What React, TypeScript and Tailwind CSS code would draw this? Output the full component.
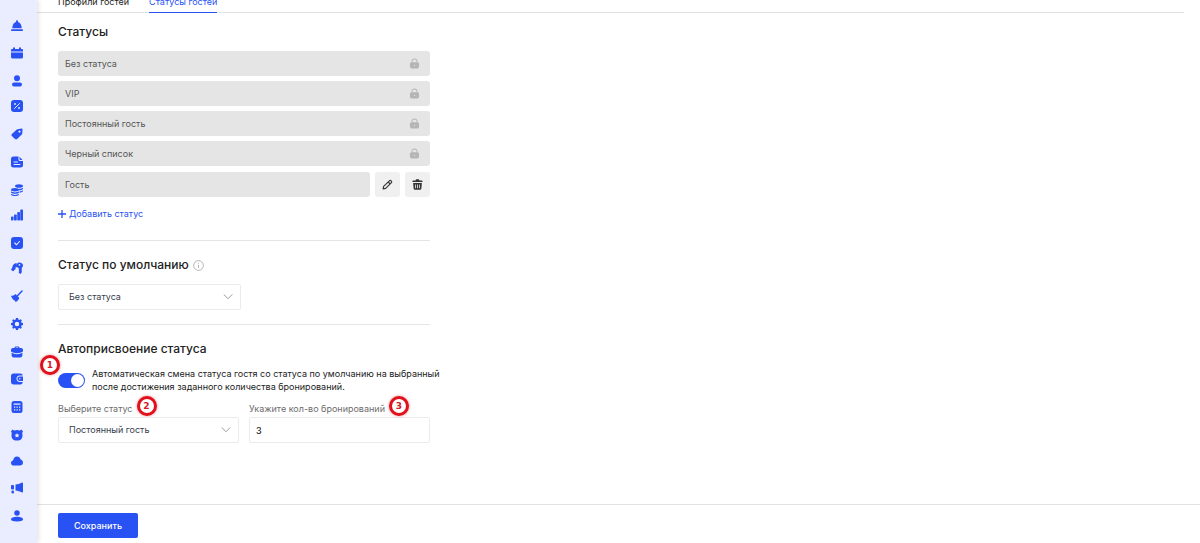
import React from 'react';
import clsx from 'clsx';

type IconProps = { className?: string; children: React.ReactNode };

const Glyph: React.FC<IconProps> = ({ className = 'size-3', children }) => (
  <svg viewBox="0 0 24 24" fill="currentColor" aria-hidden="true" className={className}>
    {children}
  </svg>
);

const cut = '#e9edff';

const NAV: { label: string; height: string; art: React.ReactNode }[] = [
  {
    label: 'Ресепшен',
    height: 'h-7',
    art: (
      <>
        <path d="M10 1h4v3.200c4.600 1 7 5 7.500 12.300h-19C3 9.200 5.400 5.200 10 4.200z" />
        <rect x="0" y="18.500" width="24" height="3.500" rx="1.500" />
      </>
    ),
  },
  {
    label: 'Календарь',
    height: 'h-[27px]',
    art: (
      <>
        <path d="M4 1h4v3h8V1h4v3h2a2 2 0 0 1 2 2v3H0V6a2 2 0 0 1 2-2h2z" />
        <path d="M0 11h24v9a3 3 0 0 1-3 3H3a3 3 0 0 1-3-3z" />
      </>
    ),
  },
  {
    label: 'Гости',
    height: 'h-7',
    art: (
      <>
        <circle cx="12" cy="6.500" r="6" />
        <rect x="2" y="15" width="20" height="8" rx="4" />
      </>
    ),
  },
  {
    label: 'Тарифы',
    height: 'h-[25px]',
    art: (
      <>
        <rect x="0" y="0" width="24" height="24" rx="6" />
        <path d="M7 17 17 7" stroke={cut} strokeWidth="2" strokeLinecap="round" />
        <circle cx="8" cy="8" r="1.800" fill={cut} />
        <circle cx="16" cy="16" r="1.800" fill={cut} />
      </>
    ),
  },
  {
    label: 'Акции',
    height: 'h-7',
    art: (
      <path
        fillRule="evenodd"
        d="M13 2.500 21 1c1.200-.2 2 .6 2 1.800l-.5 8c0 .8-.4 1.500-1 2.100l-9.300 9.300c-1.200 1.200-3 1.200-4.200 0L1.800 16c-1.200-1.200-1.200-3 0-4.200L11 3.400c.6-.5 1.200-.8 2-.9zM17 5a2.200 2.200 0 1 0 0 4.400A2.200 2.200 0 0 0 17 5z"
      />
    ),
  },
  {
    label: 'Документы',
    height: 'h-7',
    art: (
      <>
        <path d="M5 1h10v6a3 3 0 0 0 3 3h6v8a5 5 0 0 1-5 5H5a5 5 0 0 1-5-5V6a5 5 0 0 1 5-5z" />
        <path d="M17 1.500 23 8h-4a2 2 0 0 1-2-2z" />
        <path d="M6 12h7M6 17h12" stroke={cut} strokeWidth="2" strokeLinecap="round" />
      </>
    ),
  },
  {
    label: 'Финансы',
    height: 'h-7',
    art: (
      <>
        <ellipse cx="16" cy="4" rx="8" ry="3.500" />
        <path d="M10 9.500c4 1 11 .8 14-1.800v2c-1 2-4 3-7 3zM17 15c3-.2 6-1 7-3v2.200c-1 2-4 3-7 3.200z" />
        <ellipse cx="8" cy="11.500" rx="8" ry="3.300" />
        <path d="M0 14.500c3 3 13 3 16 0v2.300c-2 3.400-14 3.400-16 0zM0 19.500c3 3 13 3 16 0v1.800c-2 3.400-14 3.400-16 0z" />
      </>
    ),
  },
  {
    label: 'Отчёты',
    height: 'h-[25px]',
    art: (
      <>
        <rect x="0" y="15" width="5" height="8" rx="1.500" />
        <rect x="6" y="11" width="5.500" height="12" rx="1.500" />
        <rect x="12.500" y="6" width="5.500" height="17" rx="1.500" />
        <rect x="18.500" y="1" width="5.500" height="22" rx="1.500" />
      </>
    ),
  },
  {
    label: 'Задачи',
    height: 'h-7',
    art: (
      <>
        <rect x="0" y="0" width="24" height="24" rx="6" />
        <path d="m7.500 12 3.500 3.500 6-6.500" fill="none" stroke={cut} strokeWidth="2.200" strokeLinecap="round" />
      </>
    ),
  },
  {
    label: 'Ключи',
    height: 'h-[25px]',
    art: (
      <>
        <path d="M11 2c-5 1-8 4-8 8l-3 5.500 4 3 2-1 .5-2 2.500-.5V11l3-1z" />
        <path
          fillRule="evenodd"
          d="M17 1c4 0 7 2.700 7 6 0 2-1 3.600-2.500 4.600V21l-3 3-3-2.500v-2l1-1.500-1-1.500v-4.600C12 10.800 10.500 9 10.500 7c0-3.300 3-6 6.500-6zm0 3a1.700 1.700 0 1 0 0 3.400A1.700 1.700 0 0 0 17 4z"
        />
      </>
    ),
  },
  {
    label: 'Уборка',
    height: 'h-7',
    art: (
      <>
        <path d="m22 2-9 9.500" stroke="currentColor" strokeWidth="3" strokeLinecap="round" />
        <path d="m9 8 7.500 7.500c-1 4-3.500 7-7 8.500-1-1-1.500-2-1.800-3.200-1.200 0-2.300-.5-3-1.300C3 17.700 1 15 0 11.500 3.500 12 6.500 11 9 8z" />
      </>
    ),
  },
  {
    label: 'Настройки',
    height: 'h-7',
    art: (
      <path
        fillRule="evenodd"
        d="m10 0h4l.8 3.200 2 .8L19.700 2.400l2 2L20.200 7.300l.8 2 3 .7v4l-3 .8-.8 2 1.500 2.900-2 2-2.900-1.600-2 .8L14 24h-4l-.8-3.100-2-.8-2.900 1.600-2-2 1.500-2.900-.8-2L0 14v-4l3-.7.8-2-1.500-2.900 2-2L7.200 4l2-.8zM12 7.500a4.500 4.500 0 1 0 0 9 4.500 4.500 0 0 0 0-9z"
      />
    ),
  },
  {
    label: 'Услуги',
    height: 'h-7',
    art: (
      <>
        <path
          fillRule="evenodd"
          d="M7 4c0-2 1-3 3-3h4c2 0 3 1 3 3h3c2.500 0 4 1.500 4 4v3c-7 4.500-17 4.500-24 0V8c0-2.500 1.500-4 4-4zm2.500 0h5c0-.8-.3-1-1-1h-3c-.7 0-1 .2-1 1z"
        />
        <path d="M1 13.500c6.500 3.800 15.500 3.800 22 0l-.4 5.500c-.2 2.500-1.600 4-4 4H5.400c-2.400 0-3.800-1.500-4-4z" />
      </>
    ),
  },
  {
    label: 'Касса',
    height: 'h-[27px]',
    art: (
      <>
        <path d="M5 1h14c2.500 0 4 1.500 4.500 4H17c-3.500 0-6 3-6 6.500s2.500 6.500 6 6.500h6.500c-.5 3-2 5-4.500 5H5c-3 0-5-2-5-5V6c0-3 2-5 5-5z" />
        <path
          fillRule="evenodd"
          d="M17 7h7v9h-7c-2.500 0-4-2-4-4.500S14.500 7 17 7zm.5 3a1.500 1.500 0 1 0 0 3 1.500 1.500 0 0 0 0-3z"
        />
      </>
    ),
  },
  {
    label: 'Калькулятор',
    height: 'h-7',
    art: (
      <>
        <rect x="1" y="0" width="22" height="24" rx="5" />
        <path d="M6 6h12" stroke={cut} strokeWidth="2.500" strokeLinecap="round" />
        <path d="M6 12h2.500M11 12h2.500M16 12h2.500M6 17.500h2.500M11 17.500h2.500M16 17.500h2.500" stroke={cut} strokeWidth="2.500" />
      </>
    ),
  },
  {
    label: 'Лояльность',
    height: 'h-7',
    art: (
      <path
        fillRule="evenodd"
        d="M3 1c2 2 5 2.500 9 1 4 1.500 7 1 9-1l3 4c-2 2-1.500 4-1 7 .5 7-3 11-11 11S.5 19 1 12c.5-3 1-5-1-7zm9 7-1.500 3-3.300.5 2.400 2.300-.6 3.300 3-1.600 3 1.600-.6-3.300 2.400-2.300-3.300-.5z"
      />
    ),
  },
  {
    label: 'Облако',
    height: 'h-[26px]',
    art: (
      <path d="M6 21c-3.500 0-6-2-6-5.200 0-2.600 1.700-4.600 4.200-5C5 6 8 3 12 3c3.600 0 6.300 2.200 7.300 5.800C22.200 9.800 24 12 24 15c0 3.500-2.500 6-6 6z" />
    ),
  },
  {
    label: 'Новости',
    height: 'h-[27px]',
    art: (
      <>
        <path d="M9 5c5 0 9-2 13-4 1 0 2 .6 2 2v16c0 1.400-1 2-2 2-4-2-8-4-13-4z" />
        <rect x="0" y="6" width="6" height="9" rx="2" />
        <rect x="1" y="17" width="5" height="6" rx="2" />
      </>
    ),
  },
  {
    label: 'Профиль',
    height: 'h-7',
    art: (
      <>
        <circle cx="12" cy="6" r="5.500" />
        <path d="M12 13.500c7 0 12 2 12 5S19 23 12 23 0 21.500 0 18.500s5-5 12-5z" />
      </>
    ),
  },
];

const LOCKED = ['Без статуса', 'VIP', 'Постоянный гость', 'Черный список'];

const Sidebar: React.FC = () => (
  <nav className="relative z-10 w-[37px] shrink-0 bg-[#e9edff] pt-1 shadow-[1px_0_5px_rgba(0,0,0,0.14)]">
    {NAV.map(({ label, height, art }) => (
      <a key={label} href="#" aria-label={label} className={clsx('flex items-end pl-[11px] text-[#2952f5]', height)}>
        <Glyph className="size-3">{art}</Glyph>
      </a>
    ))}
  </nav>
);

const Marker: React.FC<{ n: number; className: string }> = ({ n, className }) => (
  <span
    className={clsx(
      'absolute flex size-5 items-center justify-center rounded-full border-[3px] border-[#e0101c] bg-white font-["DejaVu_Sans",sans-serif] text-[9px] leading-none font-bold text-[#d0202a] shadow-[0_0_3px_rgba(220,16,28,0.5)]',
      className,
    )}
  >
    {n}
  </span>
);

const Select: React.FC<{ id: string; label?: string; options: string[] }> = ({ id, label, options }) => (
  <div className="relative">
    <select
      id={id}
      aria-label={label}
      className="block h-[26px] w-full appearance-none rounded-xs border border-[#ebebeb] bg-white pr-6 pl-[10px] text-[9px] text-[#37404c]"
    >
      {options.map((option) => (
        <option key={option}>{option}</option>
      ))}
    </select>
    <svg
      viewBox="0 0 10 6"
      fill="none"
      stroke="#9a9a9a"
      className="pointer-events-none absolute top-[10px] right-2 h-[6px] w-[10px]"
    >
      <path d="m1 .7 4 4 4-4" strokeLinecap="round" />
    </svg>
  </div>
);

const StatusInput: React.FC<{ value: string }> = ({ value }) => (
  <input
    readOnly
    aria-label="Название статуса"
    value={value}
    className="h-[25px] w-full min-w-0 rounded-[3px] bg-[#e5e5e5] px-[7px] text-[9px] text-[#555]"
  />
);

const iconButton = 'flex size-[25px] shrink-0 items-center justify-center rounded-[3px] bg-[#f0f0f0] text-[#333]';
const heading = 'text-[12px] leading-4 font-medium text-[#222]';

export default function App() {
  return (
    <div className="flex min-h-screen bg-white font-[Inter,'Noto_Sans',sans-serif] text-[9px] leading-3 text-[#222]">
      <Sidebar />

      <div className="flex min-w-0 flex-1 flex-col">
        {/* Tabs */}
        <div className="mr-4 flex h-[13px] items-end gap-5 border-b border-[#e2e2e2] pl-[21px]">
          <a href="#" className="pb-1">
            Профили гостей
          </a>
          <a href="#" className="-mb-px border-b border-[#2952f5] pb-1 text-[#2952f5]">
            Статусы гостей
          </a>
        </div>

        <main className="w-full max-w-[393px] pl-[21px]">
          <h2 className={clsx(heading, 'mt-[11px]')}>Статусы</h2>
          <ul className="mt-[11px] flex flex-col gap-[5px]">
            {LOCKED.map((name) => (
              <li key={name} className="relative flex">
                <StatusInput value={name} />
                <Glyph className="absolute top-[7px] right-[10px] size-[11px] text-[#b5b5b5]">
                  <path
                    fillRule="evenodd"
                    d="M5.500 9V7.500C5.500 3.500 8 1 12 1s6.500 2.500 6.500 6.500V9c2.500.3 3.500 2 3.500 4.500V18c0 3.500-2 5-5 5H7c-3 0-5-1.500-5-5v-4.500C2 11 3 9.300 5.500 9zm2 0h9V7.500C16.500 4.500 15 3 12 3S7.500 4.500 7.500 7.500zm4.500 5.500a1.500 1.500 0 1 0 0 3 1.500 1.500 0 0 0 0-3z"
                  />
                </Glyph>
              </li>
            ))}
          </ul>
          <div className="mt-[6px] flex gap-[5px]">
            <StatusInput value="Гость" />
            <button type="button" aria-label="Изменить" className={iconButton}>
              <svg viewBox="0 0 24 24" fill="none" stroke="currentColor" strokeWidth="2.500" strokeLinejoin="round" className="size-[11px]">
                <path d="M15.500 4.500 3.500 16 2.500 21.500 8 20.500 20 8.500c1.600-1.600 1.600-2.800 0-4.300s-3-1.300-4.500.3zM13.500 6.500l4.500 4.500" />
              </svg>
            </button>
            <button type="button" aria-label="Удалить" className={iconButton}>
              <Glyph className="size-[11px]">
                <path d="M8 3c0-1.500 1-2.500 2.500-2.500h3C15 .5 16 1.500 16 3h5c1 0 2 .8 2 2v1.500H1V5c0-1.200 1-2 2-2z" />
                <path
                  fillRule="evenodd"
                  d="M2.500 8.500h19L20.500 20c-.2 2.400-1.700 3.500-4 3.500h-9c-2.300 0-3.800-1.100-4-3.500zM7 12v8h1.800v-8zm4.100 0v8h1.800v-8zm4.100 0v8H17v-8z"
                />
              </Glyph>
            </button>
          </div>
          <button type="button" className="mt-[11px] flex h-3 items-center gap-[3px] text-[#2952f5]">
            <svg viewBox="0 0 8 8" stroke="currentColor" strokeWidth="1.300" className="size-2">
              <path d="M4 0v8M0 4h8" />
            </svg>
            Добавить статус
          </button>

          <hr className="mt-5 border-[#e5e5e5]" />

          <h2 className={clsx(heading, 'mt-4 flex items-center gap-1')}>
            Статус по умолчанию
            <svg viewBox="0 0 12 12" fill="none" stroke="#9b9b9b" strokeWidth=".8" className="size-[11px]">
              <circle cx="6" cy="6" r="5.300" />
              <path d="M6 5.300v3.400M6 3v1.100" />
            </svg>
          </h2>
          <div className="mt-[11px] w-[183px]">
            <Select id="default-status" label="Статус по умолчанию" options={['Без статуса', 'VIP']} />
          </div>

          <hr className="mt-[14px] border-[#e5e5e5]" />

          <h2 className={clsx(heading, 'mt-4')}>Автоприсвоение статуса</h2>
          <div className="relative mt-[10px] flex items-center gap-[7px]">
            <Marker n={1} className="-top-[12px] -left-[18px]" />
            <input
              id="auto-status"
              type="checkbox"
              role="switch"
              defaultChecked
              className="h-[15px] w-[27px] shrink-0 appearance-none rounded-full bg-[#d0d0d0] p-px before:block before:size-[13px] before:rounded-full before:bg-white checked:bg-[#2952f5] checked:before:ml-3"
            />
            <label htmlFor="auto-status" className="leading-[13px] whitespace-nowrap">
              Автоматическая смена статуса гостя со статуса по умолчанию на выбранный
              <br />
              после достижения заданного количества бронирований.
            </label>
          </div>

          <div className="mt-[10px] grid grid-cols-2 gap-[10px]">
            <div>
              <label htmlFor="status" className="relative mb-[2px] inline-block align-top text-[#6d6d6d]">
                Выберите статус
                <Marker n={2} className="-top-[7px] left-full ml-1" />
              </label>
              <Select id="status" options={['Постоянный гость', 'VIP']} />
            </div>
            <div>
              <label htmlFor="count" className="relative mb-[2px] inline-block align-top text-[#6d6d6d]">
                Укажите кол-во бронирований
                <Marker n={3} className="-top-[7px] left-full ml-1" />
              </label>
              <input
                id="count"
                defaultValue="3"
                className="block h-[26px] w-full rounded-xs border border-[#ebebeb] px-[6px] text-[9px] font-medium text-[#222]"
              />
            </div>
          </div>
        </main>

        <footer className="mt-auto border-t border-[#e2e2e2] pt-2 pb-[5px] pl-[21px]">
          <button type="submit" className="block h-[25px] rounded-xs bg-[#2952f5] px-4 text-[9px] font-medium text-white">
            Сохранить
          </button>
        </footer>
      </div>
    </div>
  );
}
